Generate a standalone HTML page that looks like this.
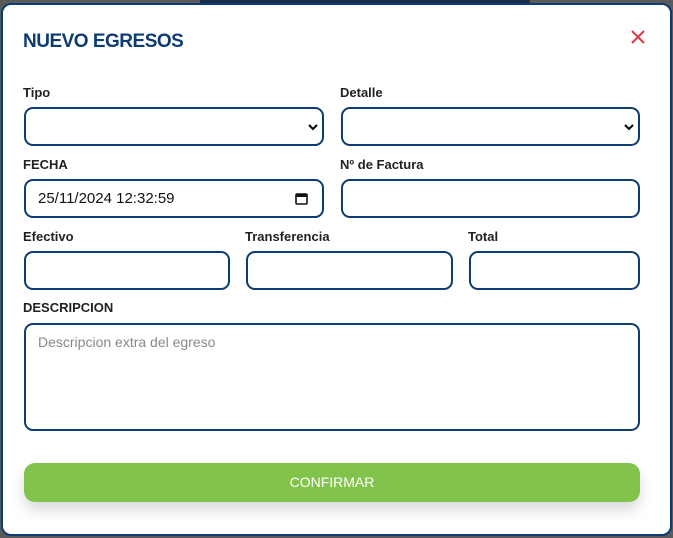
<!DOCTYPE html>
<html><head><style>
*{box-sizing:border-box;margin:0;padding:0}
html,body{width:673px;height:538px;overflow:hidden;background:#5a5a5a;font-family:"Liberation Sans",sans-serif}
.top{position:absolute;left:200px;top:0;width:330px;height:4px;background:#1a2e4a}
.modal{position:absolute;left:1px;top:3px;width:671px;height:533px;background:#fff;border:2px solid #0d3b73;border-radius:10px}
.title{position:absolute;left:20px;top:26px;font-size:19px;font-weight:bold;color:#0d3b73;letter-spacing:-0.5px}
.x{position:absolute;left:627px;top:24px}
.lbl{position:absolute;font-size:13px;font-weight:bold;color:#222}
.f{position:absolute;border:2px solid #0d3b73;border-radius:9px;background:#fff}
.btn{position:absolute;left:21px;top:458px;width:616px;height:39px;background:#82c34b;border-radius:11px;color:#fff;font-size:14px;text-align:center;line-height:39px;box-shadow:0 8px 14px rgba(0,0,0,0.15)}
</style></head><body>
<div class="top"></div>
<div class="modal">
<div class="title">NUEVO EGRESOS</div>
<svg class="x" width="16" height="16" viewBox="0 0 16 16"><path d="M2 2L14 14M14 2L2 14" stroke="#e0344a" stroke-width="2"/></svg>
<div class="lbl" style="left:20px;top:80px">Tipo</div>
<div class="lbl" style="left:337px;top:80px">Detalle</div>
<div class="f" style="left:21px;top:102px;width:300px;height:39px"><svg style="position:absolute;right:4px;top:14px" width="10" height="8" viewBox="0 0 10 8"><path d="M1 2L5 6L9 2" stroke="#000" stroke-width="2" fill="none"/></svg></div>
<div class="f" style="left:338px;top:102px;width:299px;height:39px"><svg style="position:absolute;right:4px;top:14px" width="10" height="8" viewBox="0 0 10 8"><path d="M1 2L5 6L9 2" stroke="#000" stroke-width="2" fill="none"/></svg></div>
<div class="lbl" style="left:20px;top:152px">FECHA</div>
<div class="lbl" style="left:337px;top:152px">Nº de Factura</div>
<div class="f" style="left:21px;top:174px;width:300px;height:39px"><span style="position:absolute;left:12px;top:9px;font-size:15px;color:#111">25/11/2024 12:32:59</span><svg style="position:absolute;right:14px;top:11px" width="13" height="13" viewBox="0 0 13 13"><rect x="1" y="2" width="11" height="10" rx="1" stroke="#111" stroke-width="1.6" fill="none"/><rect x="1" y="2" width="11" height="3" fill="#111"/></svg></div>
<div class="f" style="left:338px;top:174px;width:299px;height:39px"></div>
<div class="lbl" style="left:20px;top:224px">Efectivo</div>
<div class="lbl" style="left:242px;top:224px">Transferencia</div>
<div class="lbl" style="left:465px;top:224px">Total</div>
<div class="f" style="left:21px;top:246px;width:206px;height:39px"></div>
<div class="f" style="left:243px;top:246px;width:207px;height:39px"></div>
<div class="f" style="left:466px;top:246px;width:171px;height:39px"></div>
<div class="lbl" style="left:20px;top:295px">DESCRIPCION</div>
<div class="f" style="left:21px;top:318px;width:616px;height:108px"><span style="position:absolute;left:12px;top:9px;font-size:14px;color:#888">Descripcion extra del egreso</span></div>
<div class="btn">CONFIRMAR</div>
</div>
</body></html>
